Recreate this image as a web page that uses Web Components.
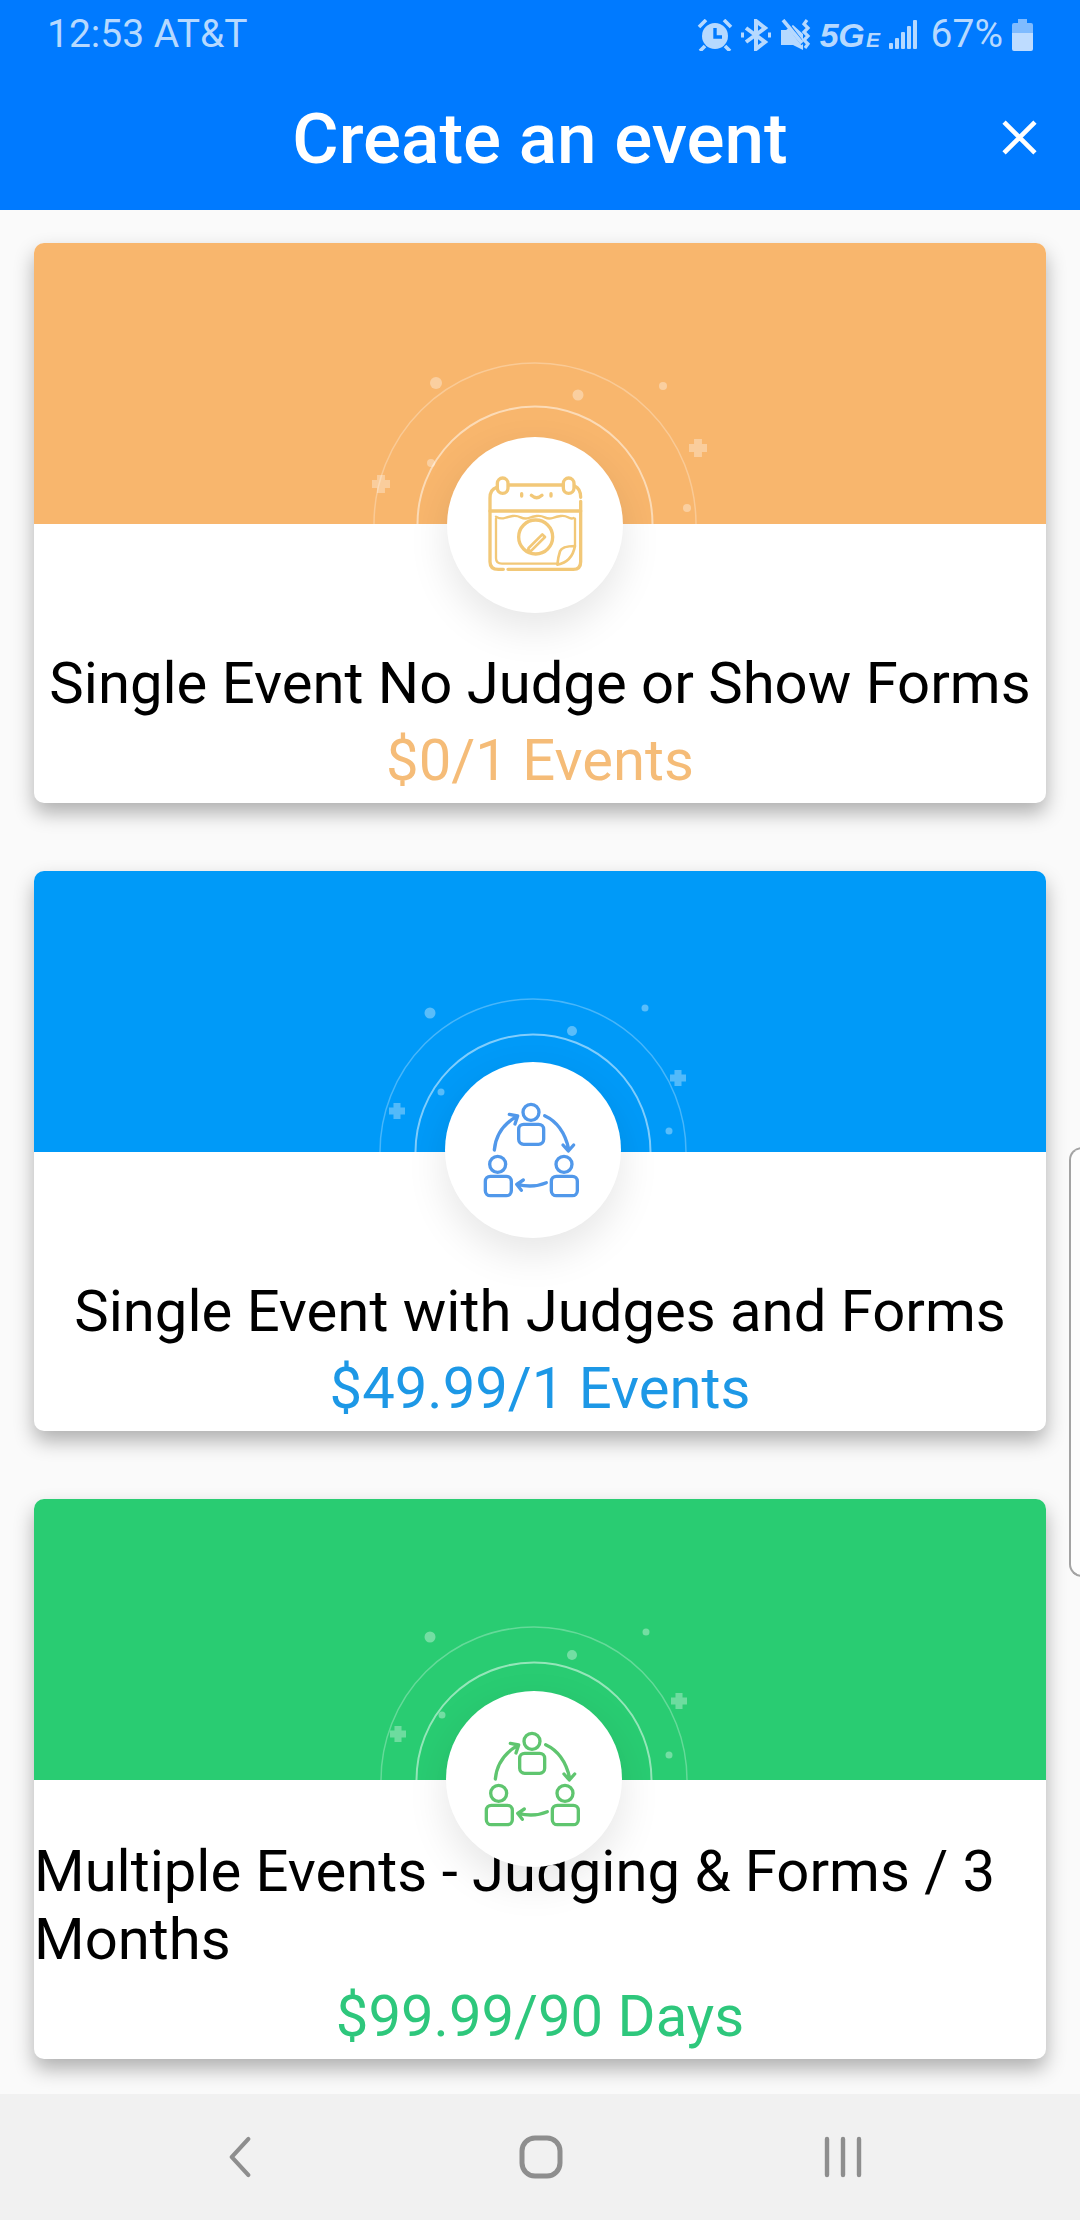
<!DOCTYPE html>
<html lang="en">
<head>
<meta charset="utf-8">
<title>Create an event</title>
<style>
html,body{margin:0;padding:0;background:#fafafa;font-family:Roboto,"Liberation Sans",sans-serif}
body{width:1080px;height:2220px;overflow:hidden}
app-screen{height:2220px}
</style>
</head>
<body>
<app-screen>
  <status-bar slot="top"></status-bar>
  <app-toolbar slot="top">Create an event</app-toolbar>
  <event-card theme="#F8B66D" price="#F5BC78" outer="161" dots="402,140,6;544,152,5.5;629,143,4;653,265,4;397,220,4" plus="347,241,18;664,205,18">
    <calendar-icon slot="icon"></calendar-icon>
    <span slot="title">Single Event No Judge or Show Forms</span>
    <span slot="price">$0/1 Events</span>
  </event-card>
  <event-card theme="#009AF8" price="#1D98E6" outer="153" cx="499" dots="396,142,5.5;538,160,5;611,137,3.5;635,260,3.5;407,221,3.5" plus="363,240,16;644,207,16">
    <people-icon slot="icon" color="#5198EA"></people-icon>
    <span slot="title">Single Event with Judges and Forms</span>
    <span slot="price">$49.99/1 Events</span>
  </event-card>
  <event-card theme="#29CC72" price="#2EC77C" outer="153" cx="500" dots="396,138,5.5;538,156,5;612,133,3.5;635,256,3.5;408,216,3.5" plus="364,235,16;645,202,16">
    <people-icon slot="icon" color="#5FC56F"></people-icon>
    <span slot="title">Multiple Events - Judging &amp; Forms / 3 Months</span>
    <span slot="price">$99.99/90 Days</span>
  </event-card>
  <nav-bar slot="bottom"></nav-bar>
  <edge-handle slot="over"></edge-handle>
</app-screen>
<script>
function define(name, html, init){
  customElements.define(name, class extends HTMLElement{
    constructor(){super();this.attachShadow({mode:'open'}).innerHTML=html;}
    connectedCallback(){ if(init) init(this,this.shadowRoot); }
  });
}

define('app-screen',`<style>
:host{display:flex;flex-direction:column;position:relative;width:1080px;overflow:hidden;background:#fafafa}
main{flex:1;min-height:0;overflow:hidden;display:flex;flex-direction:column;gap:68px;padding:33px 34px 0}
.top{display:block;background:#007AFF;height:210px;position:relative;z-index:2}
.bottom{display:block;position:relative;z-index:2}
</style>
<div class="top"><slot name="top"></slot></div>
<main><slot></slot></main>
<div class="bottom"><slot name="bottom"></slot></div>
<slot name="over"></slot>`);

define('status-bar',`<style>
:host{display:flex;align-items:center;justify-content:space-between;height:66px;padding:3px 47px 0 47px;color:#B6D9FF;font:400 39px/1 Roboto,sans-serif;box-sizing:border-box}
.r{display:flex;align-items:center}
svg{display:block}
.net{font:italic 700 34px/1 "Liberation Sans",sans-serif;display:flex;align-items:baseline;margin-left:8px;letter-spacing:-.5px}
.net small{font-size:21px;font-weight:700;margin-left:2px}
.pct{margin-left:14px;margin-right:9px}
</style>
<span>12:53 AT&amp;T</span>
<div class="r">
<svg width="36" height="32" viewBox="0 0 36 32" fill="#B6D9FF" stroke="#B6D9FF"><circle cx="18" cy="17" r="13" stroke="none"/><path d="M18 9v9h7" fill="none" stroke="#007AFF" stroke-width="3.4"/><path d="M2 8 9 1M34 8 27 1M8 27l-5 5M28 27l5 5" fill="none" stroke-width="3.6"/></svg>
<svg style="margin-left:8px" width="30" height="32" viewBox="0 0 30 32" fill="none" stroke="#B6D9FF" stroke-width="4"><path d="M5 9 24 23 15 30V2l9 7L5 23"/><path d="M0 16h3M27 16h3" stroke-width="5"/></svg>
<svg style="margin-left:9px" width="32" height="32" viewBox="0 0 32 32" fill="none" stroke="#B6D9FF"><path d="M1 11h5L13 6l10 9v16L13 26H1z" fill="#B6D9FF" stroke="none"/><path d="M6 3l17 22" stroke="#007AFF" stroke-width="4"/><path d="M3 1l19 23" stroke-width="3.6"/><path d="M27 1l-3 4 4 4-4 4 4 4-4 4 4 4-3 4" stroke-width="3.2"/></svg>
<span class="net">5G<small>E</small></span>
<svg style="margin-left:9px" width="28" height="32" viewBox="0 0 28 32" fill="#B6D9FF"><rect x="0" y="24" width="4" height="6" rx="1"/><rect x="6" y="19" width="4" height="11" rx="1"/><rect x="12" y="13" width="4" height="17" rx="1"/><rect x="18" y="7" width="4" height="23" rx="1"/><rect x="24" y="1" width="4" height="29" rx="1"/></svg>
<span class="pct">67%</span>
<svg width="21" height="32" viewBox="0 0 21 32"><path d="M6 0h9v4h4a2 2 0 0 1 2 2v8H0V6a2 2 0 0 1 2-2h4z" fill="#7FBBFF"/><path d="M0 14h21v16a2 2 0 0 1-2 2H2a2 2 0 0 1-2-2z" fill="#BEDCFF"/></svg>
</div>`);

define('app-toolbar',`<style>
:host{display:grid;grid-template-columns:1fr auto 1fr;align-items:center;height:144px;color:#fff;font:500 71px/1 Roboto,sans-serif}
.t{grid-column:2}
button{all:unset;justify-self:end;margin-right:43px;display:block;line-height:0}
svg{display:block;margin-top:-2px}
</style>
<div class="t"><slot></slot></div>
<button aria-label="Close"><svg width="35" height="35" viewBox="0 0 34 34" fill="none" stroke="#fff" stroke-width="4.5"><path d="M2 2 32 32M32 2 2 32"/></svg></button>`);

define('event-card',`<style>
:host{display:flex;flex-direction:column;flex:none;position:relative;height:560px;border-radius:10px;background:#fff;box-shadow:0 10px 20px rgba(0,0,0,.3)}
.banner{height:281px;flex:none;border-radius:10px 10px 0 0;overflow:hidden}
.banner svg{display:block}
.body{flex:1;display:flex;flex-direction:column;justify-content:flex-end;align-items:center;padding-bottom:9px}
.title{font:400 58px/68px Roboto,sans-serif;color:#000;align-self:center}
.price{font:400 58px/68px Roboto,sans-serif;margin-top:9px}
.disc{position:absolute;top:194px;left:413px;width:176px;height:176px;border-radius:50%;background:#fff;box-shadow:0 16px 40px rgba(0,0,0,.1);display:flex;align-items:center;justify-content:center}
</style>
<div class="banner"><svg width="1012" height="281" viewBox="0 0 1012 281"></svg></div>
<div class="body"><div class="title"><slot name="title"></slot></div><div class="price"><slot name="price"></slot></div></div>
<div class="disc"><slot name="icon"></slot></div>`,
(el,root)=>{
  const theme=el.getAttribute('theme');
  root.querySelector('.banner').style.background=theme;
  root.querySelector('.price').style.color=el.getAttribute('price');
  const cx=+(el.getAttribute('cx')||501), outer=+el.getAttribute('outer'), disc=root.querySelector('.disc');
  disc.style.left=(cx-88)+'px';
  if(cx===499) disc.style.top='191px'; if(cx===500) disc.style.top='192px';
  let s=`<circle cx="${cx}" cy="281" r="${outer}" fill="none" stroke="#fff" stroke-opacity=".28" stroke-width="1.5"/><circle cx="${cx}" cy="281" r="117.5" fill="none" stroke="#fff" stroke-opacity=".5" stroke-width="2"/>`;
  el.getAttribute('dots').split(';').forEach(d=>{const[x,y,r]=d.split(',');s+=`<circle cx="${x}" cy="${y}" r="${r}" fill="#fff" fill-opacity=".35"/>`;});
  el.getAttribute('plus').split(';').forEach(d=>{const[x,y,z]=d.split(',').map(Number);const w=z*.44;s+=`<g transform="translate(${x} ${y})" fill="#fff" fill-opacity=".32"><path d="M${-w/2} ${-z/2}h${w}v${(z-w)/2}h${(z-w)/2}v${w}h${-(z-w)/2}v${(z-w)/2}h${-w}v${-(z-w)/2}h${-(z-w)/2}v${-w}h${(z-w)/2}z"/></g>`;});
  root.querySelector('.banner svg').innerHTML=s;
});

define('calendar-icon',`<style>:host{display:block;width:110px;height:110px;line-height:0}</style>
<svg width="110" height="110" viewBox="0 0 330 330" fill="none" stroke="#F2C878" stroke-width="10" stroke-linecap="round" stroke-linejoin="round">
<path d="M50 52Q30 58 30 84V275Q30 298 55 298H70M84 298H280Q302 298 302 275V94M302 82Q302 56 284 48M86 45H248"/>
<rect x="52" y="24" width="32" height="46" rx="16"/><rect x="250" y="24" width="32" height="46" rx="16"/>
<path d="M125 71v7M213 71v7M154 76Q170 90 186 76"/>
<path d="M30 123H302"/>
<path d="M48 140q14 8 26 4t24-6q12-2 24 4t24 2t24-6q12-2 24 4t24 2t24-6q12-2 22 4t17 2" stroke-width="7"/>
<path d="M48 146V265Q48 281 66 281H230M285 146V226" stroke-width="7"/>
<circle cx="167" cy="201" r="51"/>
<path d="M146 234 187 193l8 8-41 41-11 2z" stroke-width="8"/>
<path d="M285 228Q246 228 240 244Q234 262 232 284Q276 276 285 228Z" stroke-width="8"/>
</svg>`);

define('people-icon',`<style>:host{display:block;width:110px;height:110px;line-height:0}</style>
<svg width="110" height="110" viewBox="0 0 330 330" fill="none" stroke="currentColor" stroke-width="10" stroke-linecap="round" stroke-linejoin="round">
<circle cx="159" cy="52" r="24"/><rect x="122" y="88" width="75" height="60" rx="15"/>
<circle cx="59" cy="208" r="24"/><rect x="22" y="244" width="78" height="58" rx="15"/>
<circle cx="258" cy="208" r="24"/><rect x="220" y="244" width="78" height="58" rx="15"/>
<path d="M49 165Q55 100 115 65M94 58 119 63 111 87"/>
<path d="M200 62Q256 88 272 162M255 150 271 168 287 150"/>
<path d="M205 263Q165 280 118 268M136 255 116 268 130 286"/>
</svg>`,(el,root)=>{root.querySelector('svg').style.color=el.getAttribute('color');});

define('nav-bar',`<style>
:host{display:flex;justify-content:center;align-items:center;height:126px;background:#F1F1F1;padding-left:2px}
div{width:302px;display:flex;justify-content:center}
svg{display:block}
</style>
<div><svg width="24" height="42" viewBox="0 0 24 42" fill="none" stroke="#8E8E8E" stroke-width="4.4" stroke-linecap="round" stroke-linejoin="round"><path d="M21 3 3 21 21 39" transform="translate(2 0) scale(.92 1)"/></svg></div>
<div><svg width="44" height="44" viewBox="0 0 44 44" fill="none" stroke="#8E8E8E" stroke-width="5"><rect x="3" y="3" width="38" height="38" rx="13"/></svg></div>
<div><svg width="38" height="42" viewBox="0 0 38 42" fill="none" stroke="#8E8E8E" stroke-width="4.4" stroke-linecap="round"><path d="M3 3V39M19 3V39M35 3V39"/></svg></div>`);

define('edge-handle',`<style>
:host{display:block;position:absolute;right:-2px;top:1147px;width:9px;height:426px;border:2px solid #A3A3A3;border-radius:14px 0 0 14px;background:rgba(255,255,255,.5)}
</style>`);
</script>
</body>
</html>
